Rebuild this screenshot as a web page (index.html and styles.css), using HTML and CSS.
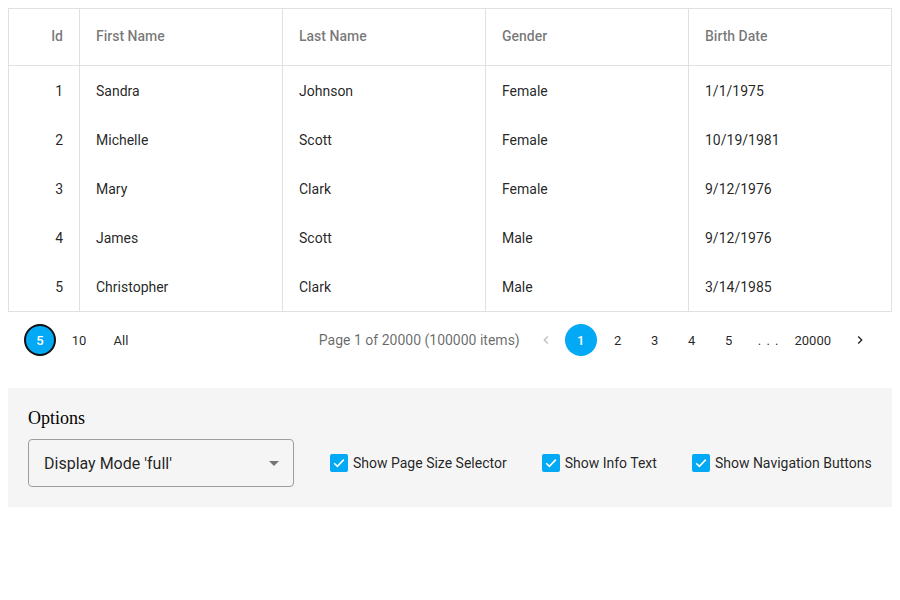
FILE: index.html
```html
<!DOCTYPE html>
<html>
<head>
<meta charset="utf-8">
<link rel="stylesheet" href="styles.css">
</head>
<body>
<div class="grid">
  <table class="table">
    <thead>
      <tr>
        <th class="num">Id</th>
        <th>First Name</th>
        <th>Last Name</th>
        <th>Gender</th>
        <th>Birth Date</th>
      </tr>
    </thead>
    <tbody>
      <tr><td class="num">1</td><td>Sandra</td><td>Johnson</td><td>Female</td><td>1/1/1975</td></tr>
      <tr><td class="num">2</td><td>Michelle</td><td>Scott</td><td>Female</td><td>10/19/1981</td></tr>
      <tr><td class="num">3</td><td>Mary</td><td>Clark</td><td>Female</td><td>9/12/1976</td></tr>
      <tr><td class="num">4</td><td>James</td><td>Scott</td><td>Male</td><td>9/12/1976</td></tr>
      <tr><td class="num">5</td><td>Christopher</td><td>Clark</td><td>Male</td><td>3/14/1985</td></tr>
    </tbody>
  </table>
  <div class="pager">
    <div class="sizes">
      <span class="size selected">5</span>
      <span class="size s10">10</span>
      <span class="size sall">All</span>
    </div>
    <div class="pages">
      <span class="info">Page 1 of 20000 (100000 items)</span>
      <span class="nav prev"><svg width="16" height="16" viewBox="0 0 24 24"><path d="M15.4 7.4 14 6l-6 6 6 6 1.4-1.4L10.8 12z" fill="currentColor"/></svg></span>
      <span class="page selected">1</span>
      <span class="page">2</span>
      <span class="page">3</span>
      <span class="page">4</span>
      <span class="page">5</span>
      <span class="dots">. . .</span>
      <span class="page big">20000</span>
      <span class="nav next"><svg width="16" height="16" viewBox="0 0 24 24"><path d="M8.6 7.4 10 6l6 6-6 6-1.4-1.4 4.6-4.6z" fill="currentColor"/></svg></span>
    </div>
  </div>
</div>

<div class="options">
  <div class="caption">Options</div>
  <div class="option-row">
    <div class="select">
      <span>Display Mode 'full'</span>
      <span class="caret"></span>
    </div>
    <label class="check first"><span class="box"><svg width="18" height="18" viewBox="0 0 18 18"><path d="M4.2 9.2 7.4 12.3 13.8 5.6" fill="none" stroke="#fff" stroke-width="1.6"/></svg></span>Show Page Size Selector</label>
    <label class="check"><span class="box"><svg width="18" height="18" viewBox="0 0 18 18"><path d="M4.2 9.2 7.4 12.3 13.8 5.6" fill="none" stroke="#fff" stroke-width="1.6"/></svg></span>Show Info Text</label>
    <label class="check"><span class="box"><svg width="18" height="18" viewBox="0 0 18 18"><path d="M4.2 9.2 7.4 12.3 13.8 5.6" fill="none" stroke="#fff" stroke-width="1.6"/></svg></span>Show Navigation Buttons</label>
  </div>
</div>
</body>
</html>
```

FILE: styles.css
```css
body {
  margin: 8px;
  font-family: Roboto, "Liberation Sans", sans-serif;
  font-size: 14px;
  color: rgba(0,0,0,0.87);
  background: #fff;
}
.grid {
  width: 884px;
}
.table {
  width: 884px;
  border-collapse: collapse;
  table-layout: fixed;
}
.table th, .table td {
  border-left: 1px solid #e0e0e0;
  border-right: 1px solid #e0e0e0;
  padding: 0 16px;
  text-align: left;
  white-space: nowrap;
}
.table th {
  height: 54px;
  padding-bottom: 2px;
  font-weight: 500;
  color: rgba(0,0,0,0.54);
  border-top: 1px solid #e0e0e0;
  border-bottom: 1px solid #e0e0e0;
}
.table td {
  height: 49px;
}
.table tbody tr:last-child td {
  border-bottom: 1px solid #e0e0e0;
  height: 49px;
}
.table th:first-child, .table td:first-child { width: 38px; }
.table .num { text-align: right; }
.pager {
  display: flex;
  justify-content: space-between;
  align-items: center;
  height: 56px;
}
.sizes {
  display: flex;
  align-items: center;
  padding-left: 16px;
}
.size {
  display: inline-flex;
  align-items: center;
  justify-content: center;
  height: 32px;
  min-width: 32px;
  box-sizing: border-box;
  border-radius: 16px;
  font-size: 13px;
}
.size.selected {
  background: #03a9f4;
  color: #fff;
  border: 2px solid #111;
  font-weight: 500;
}
.s10 { margin-left: 7px; }
.sall { margin-left: 10px; }
.pages {
  display: flex;
  align-items: center;
  padding-right: 16px;
}
.info {
  color: rgba(0,0,0,0.6);
  font-size: 14px;
  margin-right: 10px;
}
.nav {
  display: inline-flex;
  align-items: center;
  justify-content: center;
  width: 32px;
  height: 32px;
}
.prev { color: rgba(0,0,0,0.26); margin-right: -2px; }
.next { color: rgba(0,0,0,0.87); margin-left: 5px; }
.page {
  display: inline-flex;
  align-items: center;
  justify-content: center;
  height: 32px;
  min-width: 32px;
  margin-left: 5px;
  border-radius: 16px;
  font-size: 13px;
}
.page.selected {
  background: #03a9f4;
  color: #fff;
  font-weight: 500;
}
.page.big { padding: 0 8px; margin-left: 7px; }
.dots {
  margin-left: 13px;
  font-size: 13px;
  letter-spacing: 1px;
}
.options {
  margin-top: 20px;
  background: #f5f5f5;
  padding: 20px;
  width: 844px;
}
.caption {
  font-family: "Liberation Serif", serif;
  font-size: 18px;
  color: #000;
  line-height: 20px;
}
.option-row {
  display: flex;
  align-items: center;
  margin-top: 11px;
}
.select {
  box-sizing: border-box;
  flex: none;
  width: 266px;
  height: 48px;
  border: 1px solid #9e9e9e;
  border-radius: 4px;
  display: flex;
  align-items: center;
  justify-content: space-between;
  padding: 0 14px 0 15px;
  font-size: 16px;
  background: #f5f5f5;
}
.caret {
  width: 0;
  height: 0;
  border-left: 5px solid transparent;
  border-right: 5px solid transparent;
  border-top: 5px solid #757575;
}
.check {
  display: flex;
  flex: none;
  align-items: center;
  white-space: nowrap;
  font-size: 14px;
  margin-left: 35px;
}
.check.first { margin-left: 36px; }
.box {
  width: 18px;
  height: 18px;
  border-radius: 2px;
  background: #03a9f4;
  margin-right: 5px;
  display: inline-flex;
}
```
